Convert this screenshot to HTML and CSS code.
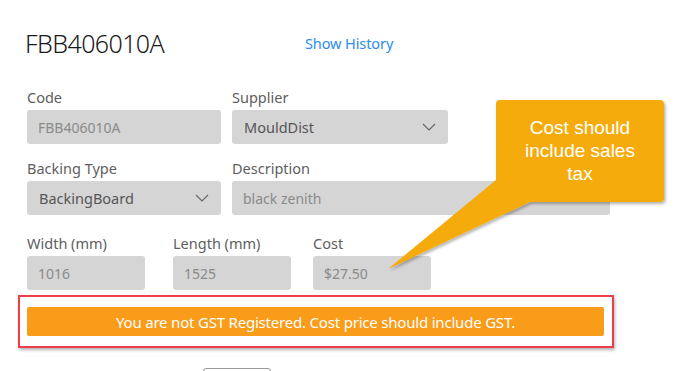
FILE: index.html
```html
<!DOCTYPE html>
<html>
<head>
<meta charset="utf-8">
<link rel="stylesheet" href="styles.css">
</head>
<body>
<div class="page">
  <div class="header">
    <h1 class="title">FBB406010A</h1>
    <a class="history">Show History</a>
  </div>

  <div class="row row1">
    <div class="field w194">
      <div class="label">Code</div>
      <div class="input muted">FBB406010A</div>
    </div>
    <div class="field w216">
      <div class="label">Supplier</div>
      <div class="input select">MouldDist<svg class="chev" width="14" height="8" viewBox="0 0 14 8"><path d="M1 1 L7 7 L13 1" fill="none" stroke="#666" stroke-width="1.1"/></svg></div>
    </div>
  </div>

  <div class="row row2">
    <div class="field w194">
      <div class="label">Backing Type</div>
      <div class="input select">BackingBoard<svg class="chev" width="14" height="8" viewBox="0 0 14 8"><path d="M1 1 L7 7 L13 1" fill="none" stroke="#666" stroke-width="1.1"/></svg></div>
    </div>
    <div class="field w378">
      <div class="label">Description</div>
      <div class="input muted">black zenith</div>
    </div>
  </div>

  <div class="row row3">
    <div class="field w118">
      <div class="label">Width (mm)</div>
      <div class="input muted">1016</div>
    </div>
    <div class="field w118 gap28">
      <div class="label">Length (mm)</div>
      <div class="input muted">1525</div>
    </div>
    <div class="field w118 gap22">
      <div class="label">Cost</div>
      <div class="input muted">$27.50</div>
    </div>
  </div>

  <div class="alert-frame">
    <div class="alert">You are not GST Registered. Cost price should include GST.</div>
  </div>

  <div class="btn-peek"></div>
</div>

<div class="callout">
  <svg class="callout-shape" width="290" height="180" viewBox="0 0 290 180">
    <defs>
      <filter id="sh" x="-10%" y="-10%" width="130%" height="130%">
        <feDropShadow dx="1.5" dy="2" stdDeviation="1.5" flood-color="#000" flood-opacity="0.3"/>
      </filter>
    </defs>
    <path d="M112 4 Q112 0 116 0 L276 0 Q280 0 280 4 L280 98 Q280 102 276 102 L146 102 L4 169 L112 80 Z" fill="#f6ab0b" filter="url(#sh)"/>
  </svg>
  <div class="callout-text">Cost should include sales tax</div>
</div>
</body>
</html>
```
FILE: styles.css
```css
html, body {
  margin: 0;
  padding: 0;
  background: #ffffff;
}
body {
  width: 699px;
  height: 371px;
  overflow: hidden;
  position: relative;
  font-family: "Noto Sans", "Open Sans", sans-serif;
}
.page {
  padding: 23px 0 0 27px;
}
.header {
  display: flex;
  align-items: center;
  height: 40px;
  margin-left: -2px;
}
.title {
  margin: 0;
  font-family: "Noto Sans", sans-serif;
  font-weight: 300;
  font-size: 25px;
  line-height: 34px;
  color: #1a1a1a;
  letter-spacing: -0.6px;
  width: 280px;
}
.history {
  font-size: 14.5px;
  color: #2a8cf0;
  cursor: pointer;
  letter-spacing: -0.1px;
}
.row {
  display: flex;
  gap: 11px;
}
.row1 { margin-top: 24px; }
.row2 { margin-top: 14px; }
.row3 { margin-top: 18px; gap: 0; }
.field { display: flex; flex-direction: column; }
.w194 { width: 194px; }
.w216 { width: 216px; }
.w378 { width: 378px; }
.w118 { width: 118px; }
.gap28 { margin-left: 28px; }
.gap22 { margin-left: 22px; }
.label {
  font-size: 14.5px;
  line-height: 20px;
  color: #5e5e5e;
  margin-bottom: 3px;
  white-space: nowrap;
}
.input {
  height: 34px;
  box-sizing: border-box;
  background: #d5d5d5;
  border-radius: 3px;
  display: flex;
  align-items: center;
  padding: 0 11px;
  font-size: 14px;
  color: #8a8a8a;
}
.select {
  color: #555;
  justify-content: space-between;
  padding: 0 12px 0 12px;
  font-size: 14.5px;
}
.alert-frame {
  margin-top: 5px;
  margin-left: -9px;
  width: 596px;
  height: 53px;
  box-sizing: border-box;
  border: 2px solid #ec3f48;
  box-shadow: 1px 2px 3px rgba(0,0,0,0.3);
  padding: 10px 8px 0 7px;
}
.alert {
  height: 29px;
  background: #f99c1a;
  border-radius: 2px;
  color: #ffffff;
  font-size: 15px;
  display: flex;
  align-items: center;
  justify-content: center;
  letter-spacing: -0.2px;
}
.btn-peek {
  margin-top: 20px;
  margin-left: 176px;
  width: 68px;
  height: 12px;
  box-sizing: border-box;
  border: 1px solid #999;
  border-radius: 3px 3px 0 0;
}
.callout {
  position: absolute;
  left: 384px;
  top: 100px;
  width: 290px;
  height: 180px;
}
.callout-shape {
  position: absolute;
  left: 0;
  top: 0;
}
.callout-text {
  position: absolute;
  left: 112px;
  top: 16px;
  width: 168px;
  text-align: center;
  font-family: "Liberation Sans", Arial, sans-serif;
  font-size: 19px;
  line-height: 23px;
  color: #ffffff;
  padding: 0 18px;
  box-sizing: border-box;
}
```
